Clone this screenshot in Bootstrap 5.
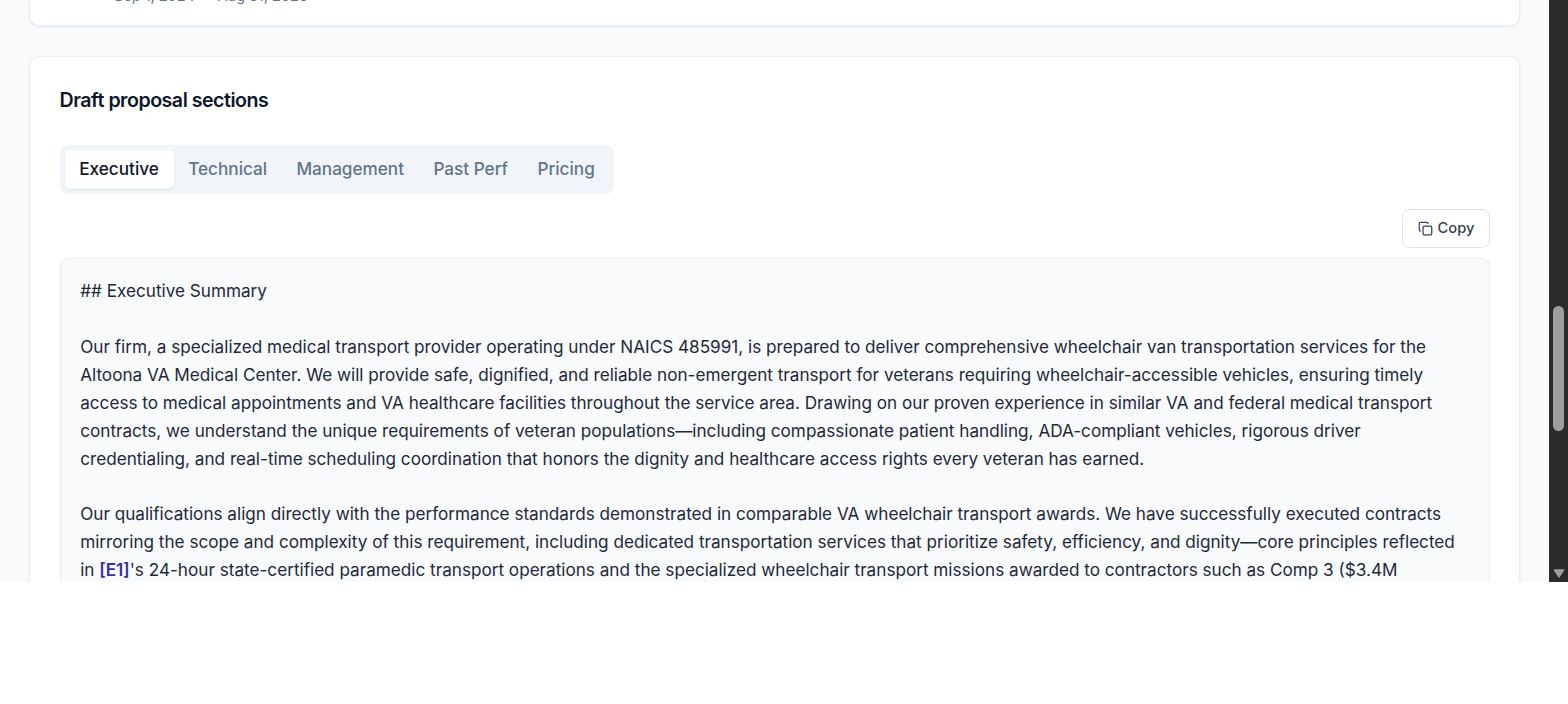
<!DOCTYPE html>
<html lang="en">
<head>
<meta charset="utf-8">
<meta name="viewport" content="width=device-width, initial-scale=1">
<title>Draft proposal sections</title>
<link href="https://cdn.jsdelivr.net/npm/bootstrap@5.3.0/dist/css/bootstrap.min.css" rel="stylesheet">
<style>
  body { font-family: Inter, sans-serif; color: #1e293b; background: #fff; overflow: hidden; }
  .viewport { height: 582px; background: #f8fafc; }
  .page { padding: 0 29px; }
  .panel { background: #fff; border: 1px solid #e9edf3; border-radius: 10px; box-shadow: 0 1px 3px rgba(15,23,42,.07); }
  .award-panel { height: 26px; margin-bottom: 29.6px; padding-left: 84px; border-top: 0; border-radius: 0 0 10px 10px; }
  .award-dates { font-size: 14.7px; letter-spacing: -.1px; line-height: 20px; margin-top: -14px; color: #64748b; white-space: pre; }
  .draft-panel { padding: 28.6px 29px 0 29.6px; height: 600px; }
  .draft-title { font-size: 19.6px; line-height: 30px; font-weight: 600; letter-spacing: -.49px; color: #0f172a; }
  .section-tabs { width: 554px; height: 49px; margin: 29.9px 0 14.7px; padding: 5px; border-radius: 8px; background: #f1f5f9; }
  .section-tabs .nav-link { padding: 0 14.7px; height: 39px; line-height: 38px; font-size: 17.15px; font-weight: 500; color: #64748b; border-radius: 5px; white-space: nowrap; }
  .section-tabs .nav-link.active { color: #0f172a; background: #fff; box-shadow: 0 1px 2px rgba(15,23,42,.08); }
  .btn-copy { width: 88px; height: 39px; padding: 0; border: 1px solid #dfe3ea; border-radius: 8px; background: #fff; color: #334155; font-size: 14.7px; font-weight: 500; gap: 4.9px; }
  .draft-text { margin-top: 10px; height: 400px; padding: 18.57px 19.6px; border: 1px solid #e9edf3; border-radius: 8px; background: #f8fafc; font-size: 17.15px; line-height: 27.87px; white-space: pre; }
  .cite { color: #3730a3; font-weight: 600; }
  .scroll-track { width: 19px; background: #2b2b2b; padding: 306px 4px 4px; }
  .scroll-thumb { width: 11px; height: 125px; border-radius: 6px; background: #9f9f9f; }
</style>
</head>
<body>
<div class="viewport d-flex overflow-hidden">
  <main class="page flex-grow-1 overflow-hidden">
    <section class="panel award-panel overflow-hidden"><div class="award-dates">Sep 1, 2024 — Aug 31, 2025</div></section>
    <section class="panel draft-panel">
      <h2 class="draft-title mb-0">Draft proposal sections</h2>
      <nav class="section-tabs nav flex-nowrap">
        <a class="nav-link active" href="#">Executive</a>
        <a class="nav-link" href="#">Technical</a>
        <a class="nav-link" href="#">Management</a>
        <a class="nav-link" href="#">Past Perf</a>
        <a class="nav-link" href="#">Pricing</a>
      </nav>
      <div class="d-flex justify-content-end">
        <button type="button" class="btn btn-copy d-flex align-items-center justify-content-center">
          <svg width="15" height="15" viewBox="0 0 24 24" fill="none" stroke="currentColor" stroke-width="2" stroke-linecap="round" stroke-linejoin="round"><rect x="8" y="8" width="14" height="14" rx="2"/><path d="M4 16c-1.1 0-2-.9-2-2V4c0-1.1.9-2 2-2h10c1.1 0 2 .9 2 2"/></svg>
          <span>Copy</span>
        </button>
      </div>
      <div class="draft-text overflow-hidden">## Executive Summary

Our firm, a specialized medical transport provider operating under NAICS 485991, is prepared to deliver comprehensive wheelchair van transportation services for the
Altoona VA Medical Center. We will provide safe, dignified, and reliable non-emergent transport for veterans requiring wheelchair-accessible vehicles, ensuring timely
access to medical appointments and VA healthcare facilities throughout the service area. Drawing on our proven experience in similar VA and federal medical transport
contracts, we understand the unique requirements of veteran populations—including compassionate patient handling, ADA-compliant vehicles, rigorous driver
credentialing, and real-time scheduling coordination that honors the dignity and healthcare access rights every veteran has earned.

Our qualifications align directly with the performance standards demonstrated in comparable VA wheelchair transport awards. We have successfully executed contracts
mirroring the scope and complexity of this requirement, including dedicated transportation services that prioritize safety, efficiency, and dignity—core principles reflected
in <span class="cite">[E1]</span>'s 24-hour state-certified paramedic transport operations and the specialized wheelchair transport missions awarded to contractors such as Comp 3 ($3.4M</div>
    </section>
  </main>
  <aside class="scroll-track d-flex flex-column align-items-center justify-content-between flex-shrink-0">
    <div class="scroll-thumb"></div>
    <svg width="12" height="9" viewBox="0 0 12 9"><path d="M1.5 1h9L6 7.8z" fill="#9f9f9f" stroke="#9f9f9f" stroke-width="1.5" stroke-linejoin="round"/></svg>
  </aside>
</div>
<script src="https://cdn.jsdelivr.net/npm/bootstrap@5.3.0/dist/js/bootstrap.bundle.min.js"></script>
</body>
</html>
